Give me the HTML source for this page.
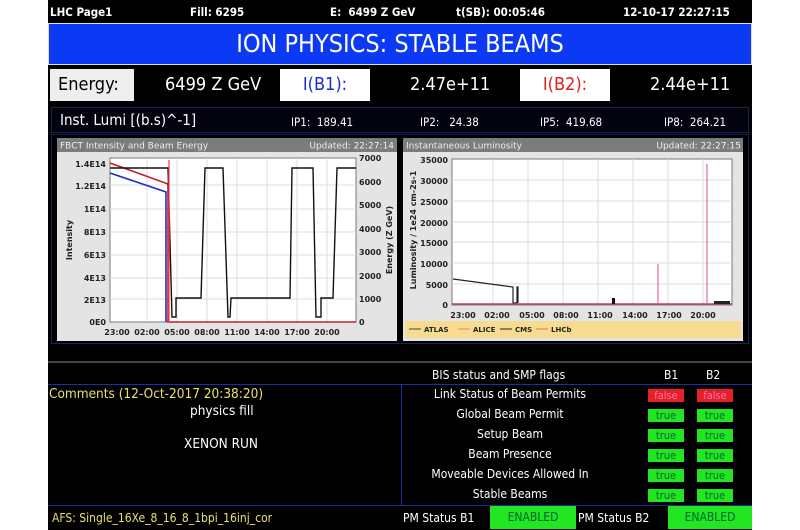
<!DOCTYPE html>
<html><head><meta charset="utf-8"><style>
*{margin:0;padding:0;box-sizing:border-box}
body{width:800px;height:530px;background:#fff;position:relative;overflow:hidden;font-family:"DejaVu Sans Condensed","DejaVu Sans","Liberation Sans",sans-serif}
.a{position:absolute}
.scr{left:48px;top:0;width:704px;height:530px;background:#000}
.hd{color:#fff;font-size:11.5px;font-weight:bold;top:5px}
.t{color:#fff}
.ok{background:#22e622;color:#063;font-size:11px;text-align:center;width:36px;height:13px;line-height:13px}
.bad{background:#e5202a;color:#f7a;font-size:11px;text-align:center;width:36px;height:13px;line-height:13px}
.rl{color:#fff;font-size:12px;text-align:center;width:240px;left:390px}
</style></head><body>
<div class="a scr"></div>
<div class="a hd" style="left:50px">LHC Page1</div>
<div class="a hd" style="left:190px">Fill: 6295</div>
<div class="a hd" style="left:330px">E:&nbsp; 6499 Z GeV</div>
<div class="a hd" style="left:456px">t(SB): 00:05:46</div>
<div class="a hd" style="left:623px">12-10-17 22:27:15</div>
<div class="a" style="left:48px;top:23px;width:704px;height:42px;background:#0b39f4;border:1px solid #ddd;color:#fff;font-size:25px;text-align:center;line-height:40px;font-family:'DejaVu Sans Condensed','Liberation Sans',sans-serif">ION PHYSICS: STABLE BEAMS</div>
<div class="a" style="left:50px;top:69px;width:84px;height:32px;background:#eee;color:#000;font-size:18px;line-height:32px;padding-left:8px">Energy:</div>
<div class="a t" style="left:165px;top:69px;font-size:18px;line-height:32px">6499 Z GeV</div>
<div class="a" style="left:280px;top:69px;width:90px;height:32px;background:#fff;color:#1a2ed0;font-size:18px;line-height:32px;text-align:center">I(B1):</div>
<div class="a t" style="left:410px;top:69px;font-size:18px;line-height:32px">2.47e+11</div>
<div class="a" style="left:520px;top:69px;width:90px;height:32px;background:#fff;color:#e02020;font-size:18px;line-height:32px;text-align:center">I(B2):</div>
<div class="a t" style="left:650px;top:69px;font-size:18px;line-height:32px">2.44e+11</div>
<div class="a" style="left:51px;top:107px;width:698px;height:26px;border:1px solid #1a2258;background:#02030e"></div>
<div class="a t" style="left:60px;top:111px;font-size:15px">Inst. Lumi [(b.s)^-1]</div>
<div class="a t" style="left:291px;top:115px;font-size:11.5px">IP1:&nbsp; 189.41</div>
<div class="a t" style="left:420px;top:115px;font-size:11.5px">IP2:&nbsp;&nbsp; 24.38</div>
<div class="a t" style="left:540px;top:115px;font-size:11.5px">IP5:&nbsp; 419.68</div>
<div class="a t" style="left:664px;top:115px;font-size:11.5px">IP8:&nbsp; 264.21</div>
<div class="a" style="left:51px;top:134px;width:698px;height:210px;border:1px solid #1a2258"></div>
<svg class="a" style="left:0;top:0" width="800" height="530" font-family="DejaVu Sans,sans-serif" font-weight="bold">
<rect x="57" y="138" width="340" height="203" fill="#e4e4e4"/>
<rect x="57" y="138" width="340" height="14" fill="#7c7c7c"/>
<text x="60" y="148.5" font-size="9" fill="#eee" font-weight="normal">FBCT Intensity and Beam Energy</text>
<text x="394" y="148.5" font-size="9" fill="#eee" text-anchor="end" font-weight="normal">Updated: 22:27:14</text>
<rect x="110" y="158" width="246" height="164" fill="#fff" stroke="#777"/>
<g stroke="#ddd" stroke-width="1">
<line x1="147" y1="158" x2="147" y2="322"/><line x1="177" y1="158" x2="177" y2="322"/><line x1="207" y1="158" x2="207" y2="322"/><line x1="237" y1="158" x2="237" y2="322"/><line x1="267" y1="158" x2="267" y2="322"/><line x1="297" y1="158" x2="297" y2="322"/><line x1="327" y1="158" x2="327" y2="322"/>
<line x1="110" y1="185" x2="356" y2="185"/><line x1="110" y1="209" x2="356" y2="209"/><line x1="110" y1="232" x2="356" y2="232"/><line x1="110" y1="255" x2="356" y2="255"/><line x1="110" y1="278" x2="356" y2="278"/><line x1="110" y1="299" x2="356" y2="299"/>
</g>
<polyline fill="none" stroke="#c02030" stroke-width="1.6" points="110,163 168,184 168,322 356,322"/>
<polyline fill="none" stroke="#2030c0" stroke-width="1.6" points="110,173 166,192 166,322"/>
<polyline fill="none" stroke="#111" stroke-width="1.4" points="110,168 168,168 172,317 176,317 176,298 201,298 205,168 223,168 228,317 230,317 231,298 290,298 292,168 313,168 316,317 321,317 321,298 333,298 337,168 356,168"/>
<polyline fill="none" stroke="#ff4060" stroke-width="1.3" points="169,322 169,160"/>
<g font-size="8" fill="#222" text-anchor="end">
<text x="106" y="167">1.4E14</text><text x="106" y="189">1.2E14</text><text x="106" y="212">1E14</text><text x="106" y="235">8E13</text><text x="106" y="258">6E13</text><text x="106" y="281">4E13</text><text x="106" y="303">2E13</text><text x="106" y="325">0E0</text>
</g>
<g font-size="8" fill="#222">
<text x="359" y="161">7000</text><text x="359" y="185">6000</text><text x="359" y="208">5000</text><text x="359" y="232">4000</text><text x="359" y="255">3000</text><text x="359" y="279">2000</text><text x="359" y="302">1000</text><text x="359" y="325">0</text>
</g>
<g font-size="8" fill="#222" text-anchor="middle">
<text x="117" y="335">23:00</text><text x="147" y="335">02:00</text><text x="177" y="335">05:00</text><text x="207" y="335">08:00</text><text x="237" y="335">11:00</text><text x="267" y="335">14:00</text><text x="297" y="335">17:00</text><text x="327" y="335">20:00</text>
</g>
<text transform="translate(72,240) rotate(-90)" font-size="8" fill="#222" text-anchor="middle">Intensity</text>
<text transform="translate(392,240) rotate(-90)" font-size="8" fill="#222" text-anchor="middle">Energy (Z GeV)</text>
<rect x="403" y="138" width="340" height="203" fill="#e4e4e4"/>
<rect x="403" y="138" width="340" height="14" fill="#7c7c7c"/>
<text x="406" y="148.5" font-size="9" fill="#eee" font-weight="normal">Instantaneous Luminosity</text>
<text x="741" y="148.5" font-size="9" fill="#eee" text-anchor="end" font-weight="normal">Updated: 22:27:15</text>
<rect x="452" y="159" width="280" height="146" fill="#fff" stroke="#777"/>
<g stroke="#ddd">
<line x1="493" y1="159" x2="493" y2="305"/><line x1="528" y1="159" x2="528" y2="305"/><line x1="563" y1="159" x2="563" y2="305"/><line x1="598" y1="159" x2="598" y2="305"/><line x1="633" y1="159" x2="633" y2="305"/><line x1="668" y1="159" x2="668" y2="305"/><line x1="703" y1="159" x2="703" y2="305"/>
<line x1="452" y1="180" x2="732" y2="180"/><line x1="452" y1="201" x2="732" y2="201"/><line x1="452" y1="222" x2="732" y2="222"/><line x1="452" y1="242" x2="732" y2="242"/><line x1="452" y1="263" x2="732" y2="263"/><line x1="452" y1="284" x2="732" y2="284"/>
</g>
<polyline fill="none" stroke="#222" stroke-width="1.2" points="453,279 513,287 513,303 517,303 517,287 518,287 518,303"/>
<line x1="452" y1="304" x2="732" y2="304" stroke="#c04060" stroke-width="1.5"/>
<line x1="658" y1="304" x2="658" y2="264" stroke="#e05070" stroke-width="1"/>
<line x1="707" y1="304" x2="707" y2="164" stroke="#e05070" stroke-width="1"/>
<rect x="612" y="298" width="3" height="6" fill="#111"/>
<rect x="714" y="301" width="16" height="3" fill="#222"/>
<g font-size="8" fill="#222" text-anchor="end">
<text x="448" y="163">35000</text><text x="448" y="184">30000</text><text x="448" y="205">25000</text><text x="448" y="226">20000</text><text x="448" y="246">15000</text><text x="448" y="267">10000</text><text x="448" y="288">5000</text><text x="448" y="308">0</text>
</g>
<g font-size="8" fill="#222" text-anchor="middle">
<text x="463" y="318">23:00</text><text x="497" y="318">02:00</text><text x="532" y="318">05:00</text><text x="566" y="318">08:00</text><text x="600" y="318">11:00</text><text x="635" y="318">14:00</text><text x="669" y="318">17:00</text><text x="703" y="318">20:00</text>
</g>
<text transform="translate(416,230) rotate(-90)" font-size="8" fill="#222" text-anchor="middle">Luminosity / 1e24 cm-2s-1</text>
<rect x="405" y="321" width="336" height="17" fill="#f7dc90"/>
<g font-size="7" fill="#222">
<line x1="409" y1="329" x2="421" y2="329" stroke="#444"/><text x="424" y="332">ATLAS</text>
<line x1="458" y1="329" x2="470" y2="329" stroke="#e08090"/><text x="473" y="332">ALICE</text>
<line x1="500" y1="329" x2="512" y2="329" stroke="#222"/><text x="515" y="332">CMS</text>
<line x1="536" y1="329" x2="548" y2="329" stroke="#d08040"/><text x="551" y="332">LHCb</text>
</g>
<line x1="48" y1="362" x2="752" y2="362" stroke="#888"/>
<line x1="48" y1="384.5" x2="752" y2="384.5" stroke="#1a2fa0"/>
<line x1="401.5" y1="384" x2="401.5" y2="505" stroke="#1a2fa0"/>
<line x1="48" y1="505.5" x2="752" y2="505.5" stroke="#1a2fa0"/>
</svg>
<div class="a t" style="left:432px;top:368px;font-size:12px">BIS status and SMP flags</div>
<div class="a t" style="left:664px;top:368px;font-size:12px">B1</div>
<div class="a t" style="left:706px;top:368px;font-size:12px">B2</div>
<div class="a" style="left:49px;top:386px;color:#e8e070;font-size:13.5px">Comments (12-Oct-2017 20:38:20)</div>
<div class="a t" style="left:190px;top:403px;font-size:13.5px">physics fill</div>
<div class="a t" style="left:184px;top:436px;font-size:13.5px">XENON RUN</div>
<div class="a rl" style="top:387px">Link Status of Beam Permits</div>
<div class="a rl" style="top:407px">Global Beam Permit</div>
<div class="a rl" style="top:427px">Setup Beam</div>
<div class="a rl" style="top:447px">Beam Presence</div>
<div class="a rl" style="top:467px">Moveable Devices Allowed In</div>
<div class="a rl" style="top:487px">Stable Beams</div>
<div class="a bad" style="left:648px;top:389px">false</div><div class="a bad" style="left:697px;top:389px">false</div>
<div class="a ok" style="left:648px;top:409px">true</div><div class="a ok" style="left:697px;top:409px">true</div>
<div class="a ok" style="left:648px;top:429px">true</div><div class="a ok" style="left:697px;top:429px">true</div>
<div class="a ok" style="left:648px;top:449px">true</div><div class="a ok" style="left:697px;top:449px">true</div>
<div class="a ok" style="left:648px;top:469px">true</div><div class="a ok" style="left:697px;top:469px">true</div>
<div class="a ok" style="left:648px;top:489px">true</div><div class="a ok" style="left:697px;top:489px">true</div>
<div class="a" style="left:52px;top:511px;color:#e8e070;font-size:12px">AFS: Single_16Xe_8_16_8_1bpi_16inj_cor</div>
<div class="a t" style="left:403px;top:511px;font-size:12px">PM Status B1</div>
<div class="a" style="left:490px;top:506px;width:86px;height:23px;background:#22e622;color:#063;font-size:12px;text-align:center;line-height:23px">ENABLED</div>
<div class="a t" style="left:578px;top:511px;font-size:12px">PM Status B2</div>
<div class="a" style="left:668px;top:506px;width:84px;height:23px;background:#22e622;color:#063;font-size:12px;text-align:center;line-height:23px">ENABLED</div>
</body></html>
